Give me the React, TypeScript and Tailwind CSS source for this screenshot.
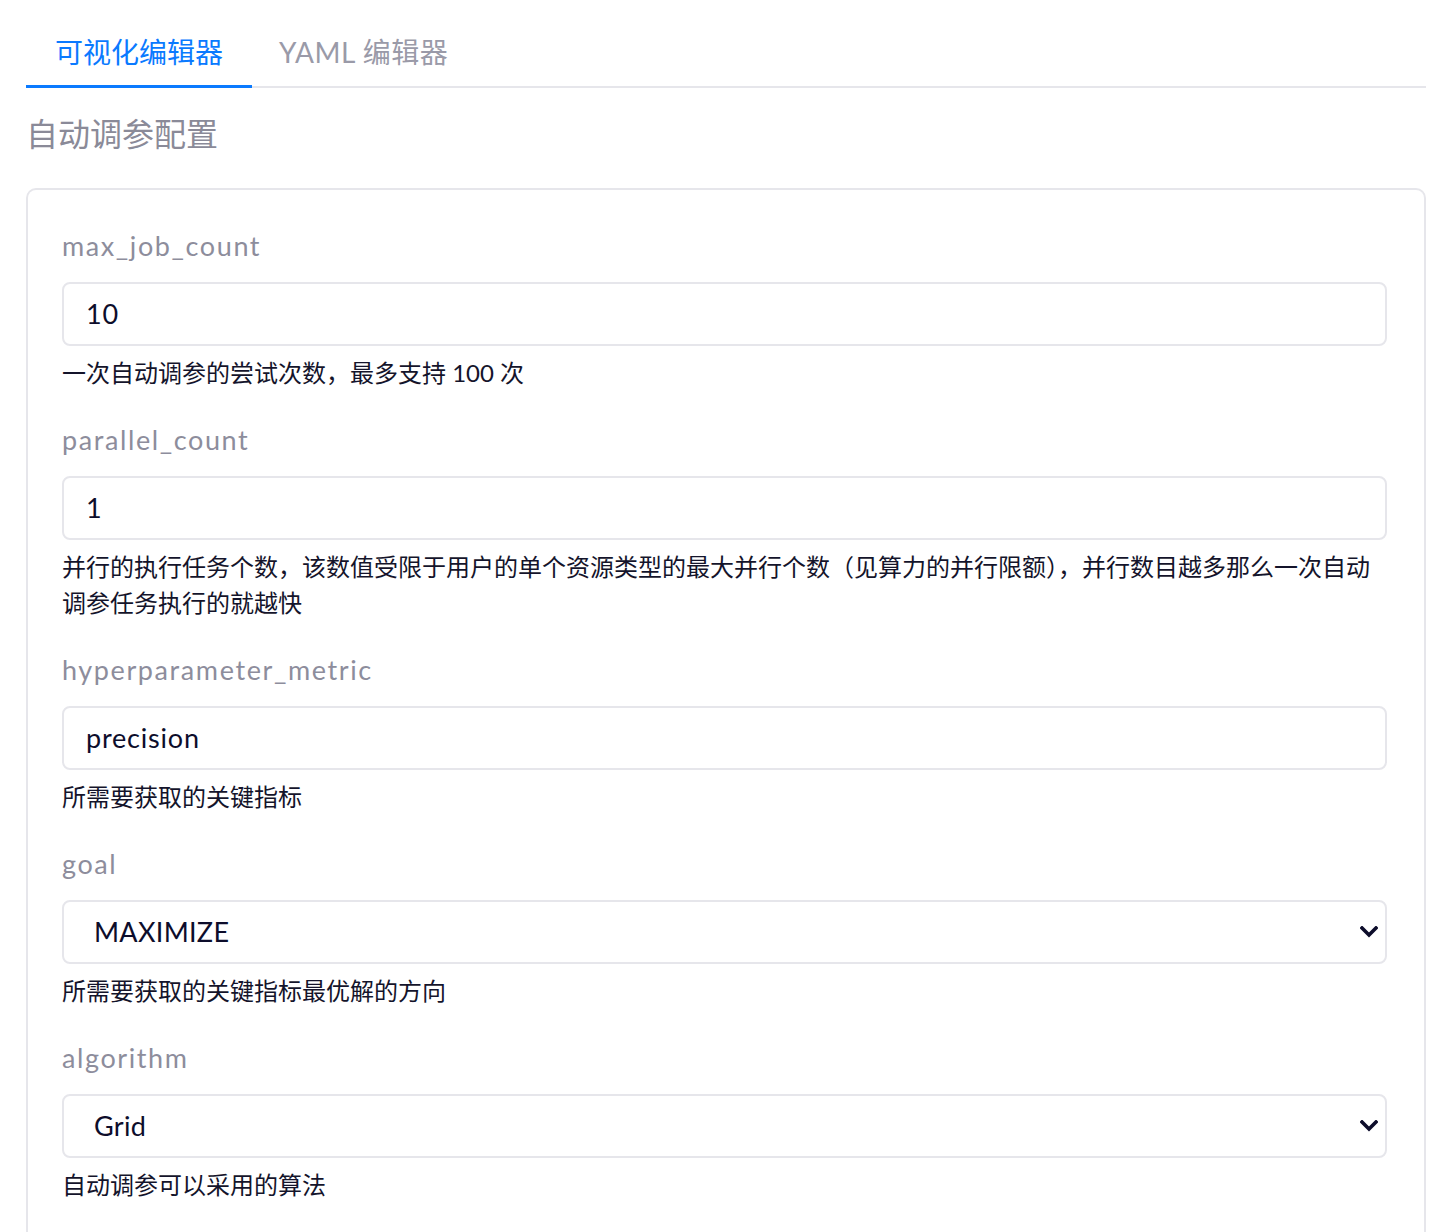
import React, { useState } from 'react';

const FONT = "font-['Lato','Noto_Sans_CJK_SC',sans-serif]";

type Field = {
  name: string;
  value: string;
  help: string;
  options?: string[];
};

const fields: Field[] = [
  { name: 'max_job_count', value: '10', help: '一次自动调参的尝试次数，最多支持 100 次' },
  {
    name: 'parallel_count',
    value: '1',
    help: '并行的执行任务个数，该数值受限于用户的单个资源类型的最大并行个数（见算力的并行限额），并行数目越多那么一次自动调参任务执行的就越快',
  },
  { name: 'hyperparameter_metric', value: 'precision', help: '所需要获取的关键指标' },
  { name: 'goal', value: 'MAXIMIZE', help: '所需要获取的关键指标最优解的方向', options: ['MAXIMIZE', 'MINIMIZE'] },
  { name: 'algorithm', value: 'Grid', help: '自动调参可以采用的算法', options: ['Grid', 'Random', 'Bayesian'] },
];

function Chevron() {
  return (
    <svg width="18" height="12" viewBox="0 0 18 12" className="pointer-events-none">
      <polyline points="2,2 9,9 16,2" fill="none" stroke="#0d0d2b" strokeWidth="3.6" strokeLinecap="square" />
    </svg>
  );
}

function FormField({ field }: { field: Field }) {
  return (
    <div className="mb-[31px]">
      <div className="text-[27px] leading-[36px] text-[#8d8d9c] tracking-[1.6px]">{field.name}</div>
      <div className="mt-[18px]">
        {field.options ? (
          <div className="relative h-[64px] rounded-[8px] border-2 border-[#e6e6eb] bg-white flex items-center pl-[30px] pr-[7px]">
            <span className="flex-1 text-[27px] text-[#0d0d2b] tracking-[0.3px]">{field.value}</span>
            <Chevron />
          </div>
        ) : (
          <div className="h-[64px] rounded-[8px] border-2 border-[#e6e6eb] bg-white flex items-center px-[22px]">
            <span className="text-[27px] text-[#0d0d2b] tracking-[0.8px]">{field.value}</span>
          </div>
        )}
      </div>
      <div className="mt-[9px] text-[24px] leading-[36px] text-[#14142b]">{field.help}</div>
    </div>
  );
}

export default function App() {
  const [tab, setTab] = useState(0);
  const tabs = ['可视化编辑器', 'YAML 编辑器'];

  return (
    <div className={`bg-white ${FONT} px-[26px] overflow-hidden h-[1232px]`}>
      {/* Tabs */}
      <div className="flex border-b-2 border-[#e6e6eb] pt-[18px]">
        {tabs.map((t, i) => (
          <button
            key={t}
            onClick={() => setTab(i)}
            className={`h-[70px] text-[28px] leading-[68px] -mb-[2px] border-b-[3px] ${
              tab === i ? 'px-[29px] text-[#0a7aff] border-[#0a7aff]' : 'px-[27px] text-[#9a9aa8] border-transparent tracking-[0.5px]'
            }`}
          >
            {t}
          </button>
        ))}
      </div>

      <h2 className="mt-[24px] text-[32px] leading-[44px] text-[#8a8a98]">自动调参配置</h2>

      {/* Card */}
      <div className="mt-[32px] rounded-t-[10px] border-2 border-b-0 border-[#e6e6eb] pt-[38px] pb-[80px] pl-[34px] pr-[37px]">
        {fields.map(f => (
          <FormField key={f.name} field={f} />
        ))}
      </div>
    </div>
  );
}
